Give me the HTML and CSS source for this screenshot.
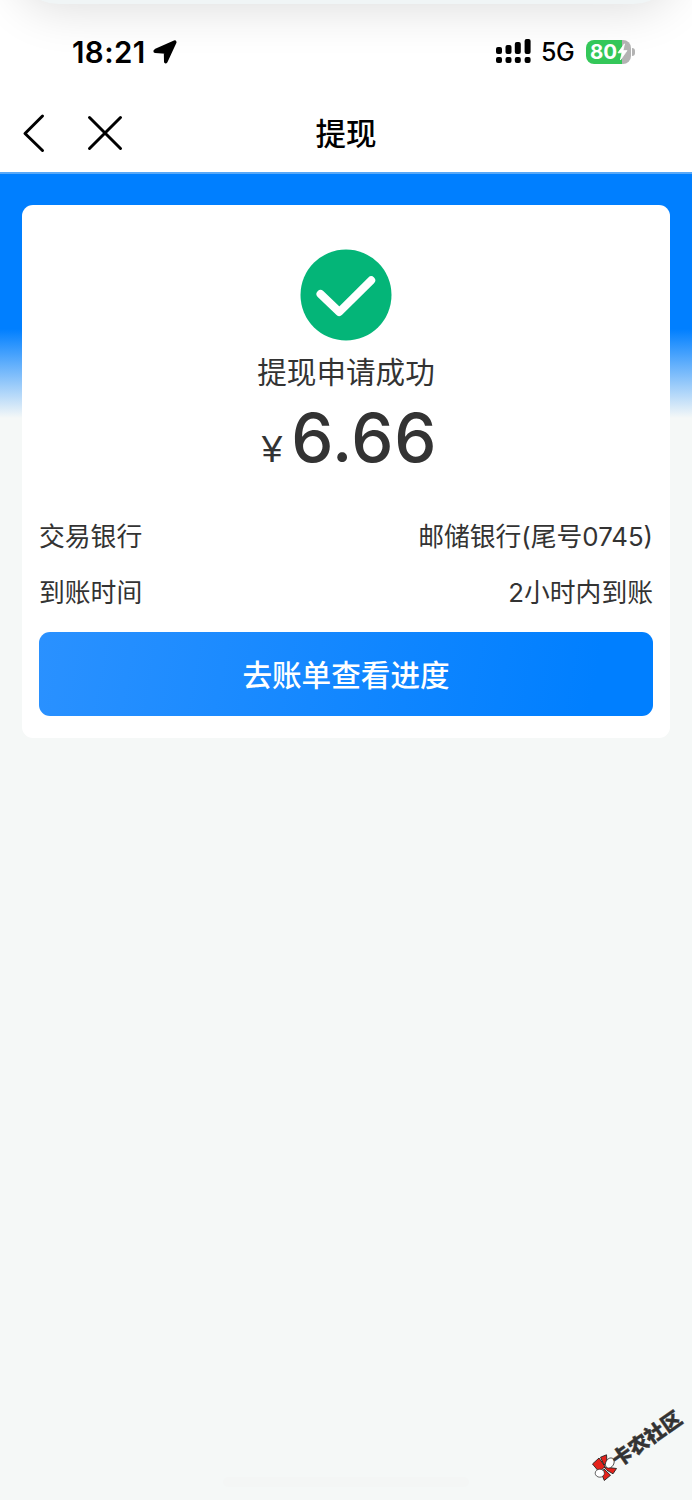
FILE: index.html
```html
<!DOCTYPE html>
<html lang="zh-CN">
<head>
<meta charset="utf-8">
<title>提现</title>
<link rel="stylesheet" href="styles.css">
</head>
<body>
<div class="screen">
  <header class="top">
    <div class="banner-edge"></div>
    <div class="status">
      <div class="status-left">
        <span class="time">18:21</span>
        <svg class="location" width="24" height="24" viewBox="0 0 24 24"><path d="M21.7 2.2 12.8 21.6 12.6 12 2.2 11.2 3 10.4Z" fill="#000" stroke="#000" stroke-width="3.6" stroke-linejoin="round"/></svg>
      </div>
      <div class="status-right">
        <svg class="signal" width="35" height="25" viewBox="0 0 35 25">
          <rect x="0" y="8" width="6" height="7" rx="2"/><rect x="9.5" y="6" width="6" height="9" rx="2"/><rect x="18.8" y="3" width="6" height="12" rx="2"/><rect x="28.6" y="0" width="6" height="15" rx="2"/>
          <rect x="0" y="18" width="6" height="6" rx="2"/><rect x="9.5" y="18" width="6" height="6" rx="2"/><rect x="18.8" y="18" width="6" height="6" rx="2"/><rect x="28.6" y="18" width="6" height="6" rx="2"/>
        </svg>
        <span class="network">5G</span>
        <div class="battery">
          <div class="battery-body"><span>80</span><svg class="bolt" width="11" height="18" viewBox="0 0 11 18"><path d="M7.5.8 1 9.8h4L3.4 17 10 7.6H6Z" fill="#fff" stroke="#fff" stroke-width=".8" stroke-linejoin="round"/></svg></div>
          <div class="battery-cap"></div>
        </div>
      </div>
    </div>
    <nav class="nav">
      <div class="nav-actions">
        <svg class="back" width="24" height="40" viewBox="0 0 24 40"><path d="M20.5 3 3 20.5 20.5 37.5"/></svg>
        <svg class="close" width="36" height="36" viewBox="0 0 36 36"><path d="m2.5 2.5 31 31m0-31-31 31"/></svg>
      </div>
      <h1>提现</h1>
      <div></div>
    </nav>
  </header>
  <main class="content">
    <section class="card">
      <svg class="success" width="92" height="92" viewBox="0 0 92 92"><circle cx="46" cy="46" r="45.5" fill="#04b578"/><path d="M20.5 45 39.3 63 71.2 31.3" fill="none" stroke="#fff" stroke-width="8" stroke-linecap="round" stroke-linejoin="round"/></svg>
      <p class="result">提现申请成功</p>
      <p class="amount"><span class="currency">¥</span><span class="value">6.66</span></p>
      <dl class="details">
        <div class="row"><dt>交易银行</dt><dd>邮储银行(尾号0745)</dd></div>
        <div class="row"><dt>到账时间</dt><dd>2小时内到账</dd></div>
      </dl>
      <button class="primary">去账单查看进度</button>
    </section>
  </main>
  <div class="home-bar"></div>
  <div class="watermark">
    <svg width="28" height="28" viewBox="0 0 28 28"><g stroke="#222" stroke-width=".9" stroke-linejoin="round"><path d="m1.5 10 6.5-6 6 8.5-5.8 5.5Z" fill="#e4221b"/><path d="m9.5 3.2 6-2.4.5 7.4-3 2.8Z" fill="#e4221b"/><path d="m13 13 12.5 1.5-3.5 5.3-6-3.5Z" fill="#e4221b"/><path d="m13 15 6.5 6.3-6.2 5.2-2.5-6Z" fill="#e4221b"/><ellipse cx="18.8" cy="9" rx="4" ry="5.4" fill="#fff" stroke-width=".7" transform="rotate(30 18.8 9)"/><ellipse cx="8.8" cy="19.2" rx="4.6" ry="4" fill="#fff" stroke-width=".7"/></g></svg>
    <span>卡农社区</span>
  </div>
</div>
</body>
</html>
```
FILE: styles.css
```css
* { box-sizing: border-box; }
body {
  margin: 0;
  font-family: Inter, "Noto Sans CJK SC", sans-serif;
  color: #333;
}
h1, p, dl, dd { margin: 0; }
.screen {
  position: relative;
  height: 1500px;
  overflow: hidden;
  background: #f5f8f7;
}
.top {
  position: relative;
  height: 174px;
  overflow: hidden;
  background: #fff;
  border-bottom: 2px solid #59a9f8;
}
.banner-edge {
  position: absolute;
  top: -96px;
  left: 18px;
  width: 656px;
  height: 100px;
  border-radius: 40px;
  background: #f0f5f6;
  box-shadow: 0 4px 50px rgba(0, 0, 0, .14);
}
.status {
  position: relative;
  display: flex;
  justify-content: space-between;
  align-items: center;
  height: 94px;
  padding: 9px 57px 0 72px;
  color: #000;
}
.status-left, .status-right, .battery { display: flex; align-items: center; }
.time { font-size: 29.5px; font-weight: 600; letter-spacing: .4px; line-height: 40px; }
.location { margin-left: 7px; }
.signal { position: relative; left: 1px; }
.network { margin-left: 11px; font-size: 25px; font-weight: 500; letter-spacing: -.6px; line-height: 40px; }
.battery { margin-left: 12px; gap: 1px; }
.battery-body {
  display: flex;
  align-items: center;
  width: 45px;
  height: 24px;
  padding-left: 4px;
  border-radius: 8px;
  background: linear-gradient(90deg, #34c759 36px, #b3b3b3 36px);
  color: #fff;
  font-size: 20.5px;
  font-weight: 700;
}
.bolt { flex: none; }
.battery-cap { width: 3px; height: 8px; border-radius: 0 4px 4px 0; background: #b3b3b3; }
.nav {
  position: relative;
  display: grid;
  grid-template-columns: 1fr auto 1fr;
  align-items: center;
  height: 78px;
  padding: 0 22px;
}
.nav-actions { display: flex; align-items: center; gap: 41px; }
.back, .close { fill: none; stroke: #000; stroke-width: 3; stroke-linecap: round; stroke-linejoin: round; }
.nav h1 { padding-top: 2px; color: #000; font-size: 30.5px; font-weight: 500; line-height: 44px; }
.content {
  padding: 31px 22px 0;
  background: linear-gradient(#007fff 0, #007fff 155px, #f5f8f7 244px);
}
.card {
  display: flex;
  flex-direction: column;
  align-items: center;
  height: 533px;
  padding: 44px 17px 22px;
  border-radius: 11px;
  background: #fff;
}
.success { flex: none; display: block; }
.result { margin-top: 9px; font-size: 29.6px; line-height: 44px; }
.amount { display: flex; align-items: baseline; height: 82px; margin: 3px 0 0 7px; }
.currency { margin-right: 9px; font-family: "Liberation Sans", sans-serif; font-size: 37px; }
.value { font-size: 67px; font-weight: 500; letter-spacing: .8px; line-height: 82px; }
.details { width: 100%; margin-top: 29px; }
.row {
  display: flex;
  justify-content: space-between;
  height: 56px;
  font-size: 25.8px;
  line-height: 57px;
}
.primary {
  width: 100%;
  height: 84px;
  margin-top: 12px;
  padding: 1px 0 0;
  flex: none;
  border: 0;
  border-radius: 11px;
  background: linear-gradient(100deg, #2a91ff, #007fff 90%);
  color: #fff;
  font: 500 29.6px/84px Inter, "Noto Sans CJK SC", sans-serif;
}
.home-bar {
  position: absolute;
  bottom: 13px;
  left: 223px;
  width: 246px;
  height: 10px;
  border-radius: 5px;
  background: #f4f6f5;
}
.watermark {
  position: absolute;
  left: 591px;
  top: 1454px;
  display: flex;
  align-items: center;
}
.watermark span {
  position: absolute;
  left: 23px;
  top: -4px;
  font-size: 20px;
  font-weight: 900;
  line-height: 24px;
  white-space: nowrap;
  transform: rotate(-35deg);
  transform-origin: 0 50%;
  -webkit-text-stroke: .4px #333;
}
```
